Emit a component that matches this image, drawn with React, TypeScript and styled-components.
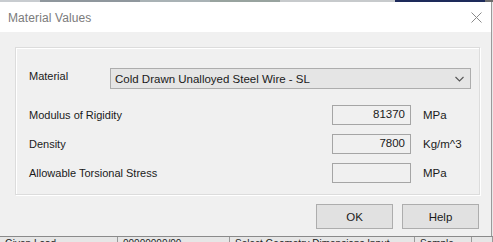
import React from "react";
import styled, { createGlobalStyle } from "styled-components";

const Global = createGlobalStyle`
  html, body { margin: 0; padding: 0; background: #d9d9d9; }
  body { font-family: "Liberation Sans", Arial, sans-serif; }
`;

const Screen = styled.div`
  width: 493px;
  height: 242px;
  overflow: hidden;
  display: flex;
  flex-direction: column;
  background: #e8e8e8;
`;

const TopStrip = styled.div`
  height: 2px;
  flex: none;
  display: flex;
`;

const StripSeg = styled.div<{ $w: number; $c: string }>`
  width: ${(p) => p.$w}px;
  background: ${(p) => p.$c};
  flex: none;
`;

const Dialog = styled.div`
  width: 491px;
  height: 234px;
  flex: none;
  display: flex;
  flex-direction: column;
  border-right: 1px solid #9a9a9a;
  background: #f0f0f0;
`;

const TitleBar = styled.div`
  height: 30px;
  flex: none;
  background: #ffffff;
  display: flex;
  align-items: center;
  justify-content: space-between;
  padding: 0 8px 0 8px;
`;

const Title = styled.span`
  font-size: 12px;
  color: #7b7b7b;
  letter-spacing: 0.1px;
  margin-top: 1px;
`;

const CloseIcon = styled.svg`
  width: 11px;
  height: 11px;
  margin-right: 1px;
`;

const Body = styled.div`
  flex: 1;
  display: flex;
  flex-direction: column;
  padding: 15px 11px 0 15px;
`;

const Group = styled.div`
  height: 148px;
  box-sizing: border-box;
  border: 1px solid #dcdcdc;
  box-shadow: inset 1px 1px 0 #ffffff, 1px 1px 0 #ffffff;
  padding: 19px 6px 0 13px;
  display: flex;
  flex-direction: column;
`;

const MaterialRow = styled.div`
  display: flex;
  align-items: center;
  height: 22px;
  margin-bottom: 16px;
`;

const Label = styled.span<{ $w?: number; $dy?: number }>`
  width: ${(p) => p.$w ?? 303}px;
  flex: none;
  font-size: 11px;
  color: #1a1a1a;
  position: relative;
  top: ${(p) => p.$dy ?? 0}px;
`;

const Combo = styled.div`
  width: 361px;
  height: 21px;
  border: 1px solid #adadad;
  background: #e5e5e5;
  display: flex;
  align-items: center;
  justify-content: space-between;
  padding: 0 6px 0 4px;
  box-sizing: border-box;
  font-size: 11.5px;
  color: #1a1a1a;
  margin-top: 1px;
`;

const Chevron = styled.svg`
  width: 9px;
  height: 6px;
`;

const FieldRow = styled.div`
  display: flex;
  align-items: center;
  height: 20px;
  margin-bottom: 9px;
`;

const NumBox = styled.div`
  width: 79px;
  height: 20px;
  box-sizing: border-box;
  border: 1px solid #a5a5a5;
  background: #f0f0f0;
  font-size: 11.5px;
  color: #1a1a1a;
  text-align: right;
  padding: 2px 5px 0 0;
  flex: none;
`;

const Unit = styled.span`
  margin-left: 12px;
  font-size: 11.5px;
  color: #1a1a1a;
`;

const Buttons = styled.div`
  display: flex;
  justify-content: flex-end;
  gap: 9px;
  margin-top: 9px;
  padding-right: 1px;
`;

const Button = styled.div`
  width: 77px;
  height: 25px;
  box-sizing: border-box;
  border: 1px solid #adadad;
  background: #e1e1e1;
  display: flex;
  align-items: center;
  justify-content: center;
  font-size: 11.5px;
  color: #1a1a1a;
`;

const BottomStrip = styled.div`
  flex: 1;
  background: #e6e6e6;
  border-top: 1px solid #8a8a8a;
  display: flex;
  overflow: hidden;
`;

const Cell = styled.div<{ $w: number }>`
  width: ${(p) => p.$w}px;
  flex: none;
  border-right: 1px solid #9a9a9a;
  font-size: 10px;
  color: #222;
  padding: 1px 0 0 5px;
  box-sizing: border-box;
  white-space: nowrap;
  overflow: hidden;
  line-height: 11px;
`;

export default function App() {
  return (
    <>
      <Global />
      <Screen>
        <TopStrip>
          <StripSeg $w={40} $c="#c8ccd0" />
          <StripSeg $w={100} $c="#8f979d" />
          <StripSeg $w={70} $c="#a9b2b5" />
          <StripSeg $w={70} $c="#98a39f" />
          <StripSeg $w={115} $c="#c7cacc" />
          <StripSeg $w={90} $c="#1d2a5a" />
          <StripSeg $w={8} $c="#6d6d6d" />
        </TopStrip>
        <Dialog>
          <TitleBar>
            <Title>Material Values</Title>
            <CloseIcon viewBox="0 0 11 11">
              <path d="M0.5 0.5 L10.5 10.5 M10.5 0.5 L0.5 10.5" stroke="#8a8a8a" strokeWidth="1" fill="none" />
            </CloseIcon>
          </TitleBar>
          <Body>
            <Group>
              <MaterialRow>
                <Label $w={81} $dy={-2}>Material</Label>
                <Combo>
                  <span>Cold Drawn Unalloyed Steel Wire - SL</span>
                  <Chevron viewBox="0 0 9 6">
                    <path d="M0.5 1 L4.5 5 L8.5 1" stroke="#555" strokeWidth="1.1" fill="none" />
                  </Chevron>
                </Combo>
              </MaterialRow>
              <FieldRow>
                <Label>Modulus of Rigidity</Label>
                <NumBox>81370</NumBox>
                <Unit>MPa</Unit>
              </FieldRow>
              <FieldRow>
                <Label>Density</Label>
                <NumBox>7800</NumBox>
                <Unit>Kg/m^3</Unit>
              </FieldRow>
              <FieldRow>
                <Label>Allowable Torsional Stress</Label>
                <NumBox />
                <Unit>MPa</Unit>
              </FieldRow>
            </Group>
            <Buttons>
              <Button>OK</Button>
              <Button>Help</Button>
            </Buttons>
          </Body>
        </Dialog>
        <BottomStrip>
          <Cell $w={118}>Given Load</Cell>
          <Cell $w={112}>00000000/00</Cell>
          <Cell $w={185}>Select Geometry Dimensions Input</Cell>
          <Cell $w={57}>Sample</Cell>
          <Cell $w={21}> </Cell>
        </BottomStrip>
      </Screen>
    </>
  );
}
